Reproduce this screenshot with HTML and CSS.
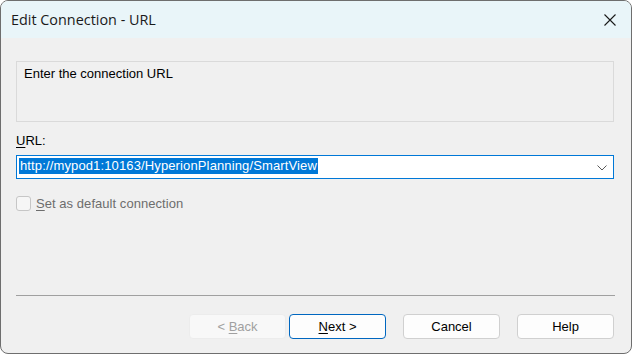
FILE: index.html
```html
<!DOCTYPE html>
<html>
<head>
<meta charset="utf-8">
<title>Edit Connection - URL</title>
<link rel="stylesheet" href="styles.css">
</head>
<body>
<div class="window">
  <div class="titlebar">
    <span class="title">Edit Connection - URL</span>
    <svg class="close" width="12" height="12" viewBox="0 0 12 12"><path d="M0.5 0.5 L11.5 11.5 M11.5 0.5 L0.5 11.5" stroke="#1a1a1a" stroke-width="1.1" fill="none"/></svg>
  </div>
  <div class="content">
    <div class="info">Enter the connection URL</div>
    <div class="label"><u>U</u>RL:</div>
    <div class="combo">
      <span class="sel">http://mypod1:10163/HyperionPlanning/SmartView</span>
      <svg class="chev" width="10" height="6" viewBox="0 0 10 6"><path d="M0.5 0.5 L5 5 L9.5 0.5" stroke="#5a5a5a" stroke-width="1" fill="none"/></svg>
    </div>
    <div class="check">
      <span class="box"></span>
      <span class="check-label"><u>S</u>et as default connection</span>
    </div>
    <div class="sep"></div>
    <div class="buttons">
      <div class="btn disabled"><span>&lt;&nbsp;<u>B</u>ack</span></div>
      <div class="btn default"><span><u>N</u>ext&nbsp;&gt;</span></div>
      <div class="btn gap"><span>Cancel</span></div>
      <div class="btn gap"><span>Help</span></div>
    </div>
  </div>
</div>
</body>
</html>
```
FILE: styles.css
```css
html, body {
  margin: 0;
  padding: 0;
  background: #ffffff;
}
.window {
  box-sizing: border-box;
  width: 632px;
  height: 354px;
  border: 1px solid #6e6e6e;
  border-radius: 8px;
  overflow: hidden;
  background: #f0f0f0;
  font-family: "Liberation Sans", Arial, sans-serif;
  font-size: 13px;
  color: #000;
}
.titlebar {
  height: 37px;
  background: #e9f5f9;
  display: flex;
  align-items: center;
  justify-content: space-between;
  padding: 0 15px 0 10px;
}
.title {
  font-family: "Open Sans", "Noto Sans", sans-serif;
  font-size: 14.4px;
  color: #1a1a1a;
  margin-top: -1px;
}
.close {
  display: block;
  margin-top: 1px;
}
.content {
  padding: 23px 0 0 15px;
}
.info {
  box-sizing: border-box;
  width: 598px;
  height: 61px;
  border: 1px solid #dadada;
  padding: 4px 7px;
  line-height: 15px;
}
.label {
  margin-top: 11px;
  line-height: 15px;
  height: 15px;
}
.label u, .check-label u, .btn u {
  text-decoration-thickness: 1px;
  text-underline-offset: 2px;
}
.combo {
  box-sizing: border-box;
  margin-top: 7px;
  width: 598px;
  height: 24px;
  border: 1px solid #0078d7;
  background: #ffffff;
  display: flex;
  align-items: center;
  justify-content: space-between;
  padding: 0 6px 0 2px;
}
.sel {
  background: #0078d7;
  color: #ffffff;
  line-height: 16px;
  padding: 0 1px;
  margin-top: -3px;
  letter-spacing: 0.13px;
}
.chev {
  display: block;
  margin-top: 1px;
}
.check {
  margin-top: 16px;
  display: flex;
  align-items: center;
  height: 16px;
}
.box {
  box-sizing: border-box;
  width: 15px;
  height: 15px;
  border: 1px solid #c6c6c6;
  border-radius: 3px;
  background: #f6f6f6;
}
.check-label {
  margin-left: 5px;
  color: #6d6d6d;
  line-height: 15px;
  letter-spacing: 0.05px;
}
.sep {
  margin-top: 84px;
  width: 599px;
  height: 1px;
  background: #a0a0a0;
}
.buttons {
  margin-top: 18px;
  display: flex;
  justify-content: flex-end;
  padding-right: 17px;
}
.btn {
  box-sizing: border-box;
  width: 97px;
  height: 25px;
  border: 1px solid #d0d0d0;
  border-radius: 4px;
  background: #fdfdfd;
  display: flex;
  align-items: center;
  justify-content: center;
  line-height: 15px;
}
.btn.disabled {
  background: #f8f8f8;
  border-color: #ececec;
  color: #a0a0a0;
}
.btn.default {
  margin-left: 3px;
  border-color: #0067c0;
}
.btn.gap {
  margin-left: 17px;
}
```
